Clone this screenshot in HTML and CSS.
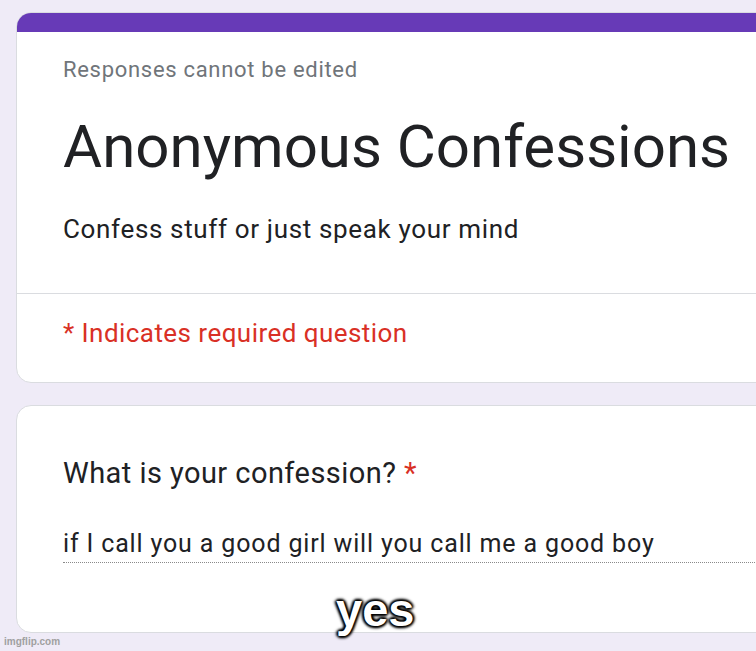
FILE: index.html
```html
<!DOCTYPE html>
<html>
<head>
<meta charset="utf-8">
<link rel="stylesheet" href="styles.css">
</head>
<body>
<div class="page">
  <div class="card card-head">
    <div class="bar"></div>
    <div class="head-main">
      <div class="note">Responses cannot be edited</div>
      <h1 class="title">Anonymous Confessions</h1>
      <div class="desc">Confess stuff or just speak your mind</div>
    </div>
    <div class="head-foot">
      <div class="required">* Indicates required question</div>
    </div>
  </div>
  <div class="card card-q">
    <div class="question">What is your confession? <span class="star">*</span></div>
    <div class="answer">if I call you a good girl will you call me a good boy</div>
  </div>
</div>
<div class="caption">yes</div>
<div class="watermark">imgflip.com</div>
</body>
</html>
```
FILE: styles.css
```css
html, body {
  margin: 0;
  padding: 0;
  width: 756px;
  height: 651px;
  overflow: hidden;
  background: #efebf7;
  font-family: Roboto, "Liberation Sans", Arial, sans-serif;
  position: relative;
}
.page {
  display: flex;
  flex-direction: column;
  gap: 22px;
  padding: 12px 0 0 16px;
}
.card {
  background: #ffffff;
  border: 1px solid #dadce0;
  border-radius: 15px;
  width: 820px;
  overflow: hidden;
}
.bar {
  height: 19px;
  background: #673ab7;
}
.head-main {
  padding: 26px 0 50px 46px;
  border-bottom: 1px solid #dadce0;
}
.note {
  font-size: 22px;
  line-height: 24px;
  letter-spacing: 0.7px;
  color: #70757a;
}
.title {
  margin: 31px 0 0 0;
  font-weight: 400;
  font-size: 60px;
  line-height: 68px;
  color: #202124;
}
.desc {
  margin-top: 34px;
  font-size: 26px;
  line-height: 28px;
  letter-spacing: 0.65px;
  color: #202124;
}
.head-foot {
  padding: 25px 0 35px 46px;
}
.required {
  font-size: 26px;
  line-height: 28px;
  letter-spacing: 0.45px;
  color: #d93025;
}
.card-q {
  height: 228px;
  padding: 0 0 0 46px;
  box-sizing: border-box;
}
.question {
  margin-top: 51px;
  font-size: 29px;
  line-height: 32px;
  letter-spacing: 0.45px;
  color: #202124;
}
.star {
  color: #d93025;
}
.answer {
  margin-top: 41px;
  font-size: 25px;
  line-height: 28px;
  letter-spacing: 0.85px;
  color: #202124;
  padding-bottom: 4px;
  border-bottom: 1px dotted #8a8a8a;
}
.caption {
  position: absolute;
  left: 336px;
  top: 583px;
  font-family: "Liberation Sans", Arial, sans-serif;
  font-weight: bold;
  font-size: 47px;
  line-height: 54px;
  color: #ffffff;
  text-shadow: 0 0 2px #000, 0 0 3px #000, 2px 0 3px #000, -2px 0 3px #000, 0 2px 3px #000, 0 -2px 3px #000;
}
.watermark {
  position: absolute;
  left: 4px;
  top: 636px;
  font-family: "Liberation Sans", Arial, sans-serif;
  font-weight: bold;
  font-size: 10px;
  line-height: 12px;
  color: #a0a0a0;
}
```
